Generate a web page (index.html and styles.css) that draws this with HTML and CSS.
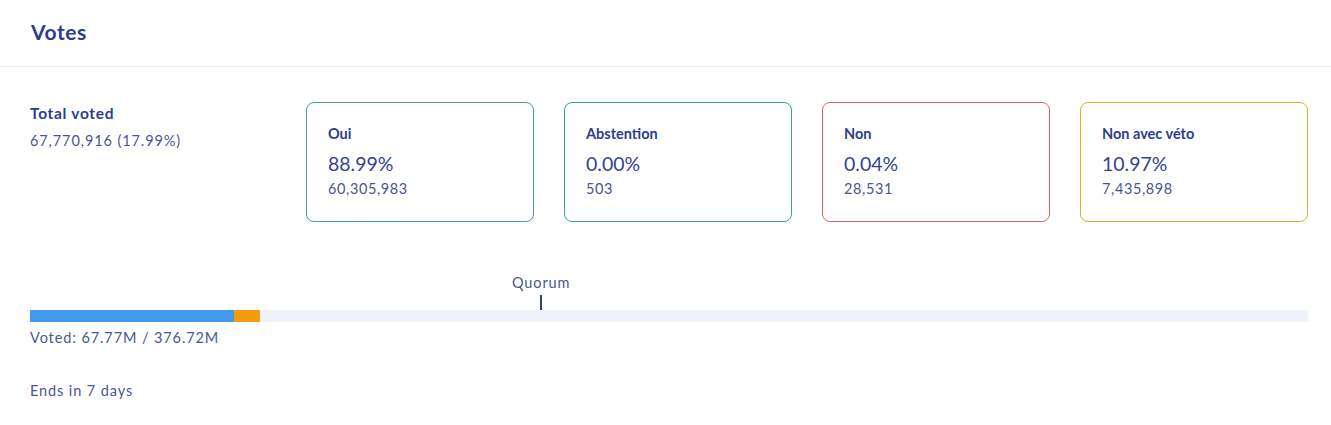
FILE: index.html
```html
<!DOCTYPE html>
<html lang="fr">
<head>
<meta charset="utf-8">
<title>Votes</title>
<link rel="stylesheet" href="styles.css">
</head>
<body>
<div class="panel">
  <header class="panel-header">
    <h2 class="panel-title">Votes</h2>
  </header>
  <section class="panel-body">
    <div class="summary">
      <div class="total">
        <div class="total-label">Total voted</div>
        <div class="total-value">67,770,916 (17.99%)</div>
      </div>
      <div class="cards">
        <div class="card card-yes">
          <div class="card-title">Oui</div>
          <div class="card-pct">88.99%</div>
          <div class="card-count">60,305,983</div>
        </div>
        <div class="card card-abstain">
          <div class="card-title">Abstention</div>
          <div class="card-pct">0.00%</div>
          <div class="card-count">503</div>
        </div>
        <div class="card card-no">
          <div class="card-title">Non</div>
          <div class="card-pct">0.04%</div>
          <div class="card-count">28,531</div>
        </div>
        <div class="card card-veto">
          <div class="card-title">Non avec véto</div>
          <div class="card-pct">10.97%</div>
          <div class="card-count">7,435,898</div>
        </div>
      </div>
    </div>
    <div class="progress-block">
      <div class="bar">
        <div class="seg seg-yes" style="width:16.0%"></div>
        <div class="seg seg-veto" style="width:1.97%"></div>
        <div class="quorum" style="left:40%">
          <span class="quorum-label">Quorum</span>
          <span class="quorum-tick"></span>
        </div>
      </div>
      <div class="voted">Voted: 67.77M / 376.72M</div>
    </div>
    <div class="ends">Ends in 7 days</div>
  </section>
</div>
</body>
</html>
```

FILE: styles.css
```css
* { box-sizing: border-box; }
html, body { margin: 0; padding: 0; background: #ffffff; }
body {
  font-family: "Lato", "Noto Sans", "Liberation Sans", sans-serif;
  color: #3f4d8c;
}
.panel { width: 1331px; }
.panel-header {
  height: 67px;
  border-bottom: 1px solid #e9ebf0;
  padding: 0 31px;
  display: flex;
  align-items: center;
}
.panel-title {
  margin: 0;
  font-size: 21px;
  font-weight: 700;
  color: #2c3d90;
  letter-spacing: 0.6px;
  padding-bottom: 4px;
}
.panel-body { padding: 35px 23px 0 30px; }
.summary { display: flex; align-items: flex-start; }
.total { width: 276px; padding-top: 1px; }
.total-label {
  font-size: 15.5px;
  font-weight: 700;
  color: #2c3d90;
  line-height: 20px;
  letter-spacing: 0.7px;
}
.total-value {
  margin-top: 8px;
  font-size: 14.5px;
  color: #4a5690;
  line-height: 20px;
  letter-spacing: 0.9px;
}
.cards {
  flex: 1;
  display: grid;
  grid-template-columns: repeat(4, 1fr);
  gap: 30px;
}
.card {
  height: 120px;
  border: 1px solid;
  border-radius: 8px;
  padding: 21px 20px 0 21px;
}
.card-yes { border-color: #4e9aaa; }
.card-abstain { border-color: #35a59c; }
.card-no { border-color: #e2625f; }
.card-veto { border-color: #e0ab2a; }
.card-title {
  font-size: 14.5px;
  font-weight: 700;
  color: #2c3d90;
  line-height: 20px;
}
.card-pct {
  margin-top: 8px;
  font-size: 19.5px;
  color: #34438c;
  line-height: 24px;
}
.card-count {
  margin-top: 4px;
  font-size: 14.5px;
  color: #4a5690;
  line-height: 18px;
  letter-spacing: 0.6px;
}
.progress-block { margin-top: 88px; }
.bar {
  position: relative;
  height: 12px;
  background: #eff2fa;
  display: flex;
}
.seg { height: 100%; }
.seg-yes { background: #4599ec; }
.seg-veto { background: #f59c0c; }
.quorum {
  position: absolute;
  bottom: 100%;
  width: 0;
  display: flex;
  flex-direction: column;
  align-items: center;
}
.quorum-label {
  font-size: 14.5px;
  color: #4a5690;
  line-height: 18px;
  white-space: nowrap;
  margin-bottom: 3px;
  letter-spacing: 0.9px;
}
.quorum-tick {
  width: 2px;
  height: 15px;
  background: #2c3d90;
}
.voted {
  margin-top: 7px;
  font-size: 14.5px;
  color: #4a5690;
  line-height: 18px;
  letter-spacing: 0.9px;
}
.ends {
  margin-top: 35px;
  font-size: 14.5px;
  color: #4a5690;
  line-height: 18px;
  letter-spacing: 0.9px;
}
```
